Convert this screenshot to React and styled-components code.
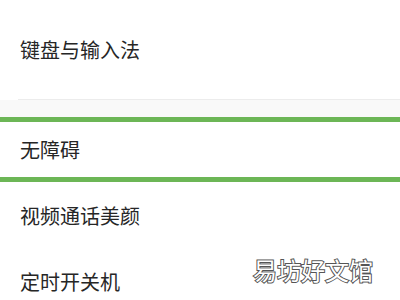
import styled, { createGlobalStyle } from "styled-components";

const Global = createGlobalStyle`
body {
  margin: 0;
  background: #ffffff;
  font-family: "Noto Sans CJK SC", "Noto Sans", sans-serif;
}
`

const Page = styled.div`
position: relative;
width: 400px;
height: 300px;
overflow: hidden;
background: #ffffff;
`
const Item = styled.div`
display: flex;
align-items: center;
height: ${props => props.h}px;
font-size: 20px;
color: #262626;
border-bottom: ${props => props.divider ? "1px solid #ececec" : "none"};
margin-left: ${props => props.divider ? "18px" : "0"};
padding-left: ${props => props.divider ? "2px" : "20px"};
`
const Gap = styled.div`
height: 17px;
background: #f9f9f9;
`
const Highlight = styled.div`
border-top: 5px solid #6cb656;
border-bottom: 5px solid #6cb656;
`
const Watermark = styled.div`
position: absolute;
left: 253px;
top: 252px;
font-size: 24px;
color: #ffffff;
-webkit-text-stroke: 2px #555555;
paint-order: stroke fill;
font-family: "Noto Sans CJK SC", sans-serif;
`

export default function App() {
    return(
        <Page>
            <Global />
            <Item h={99} divider>键盘与输入法</Item>
            <Gap />
            <Highlight>
                <Item h={55}>无障碍</Item>
            </Highlight>
            <Item h={66}>视频通话美颜</Item>
            <Item h={66}>定时开关机</Item>
            <Watermark>易坊好文馆</Watermark>
        </Page>
    )
}
